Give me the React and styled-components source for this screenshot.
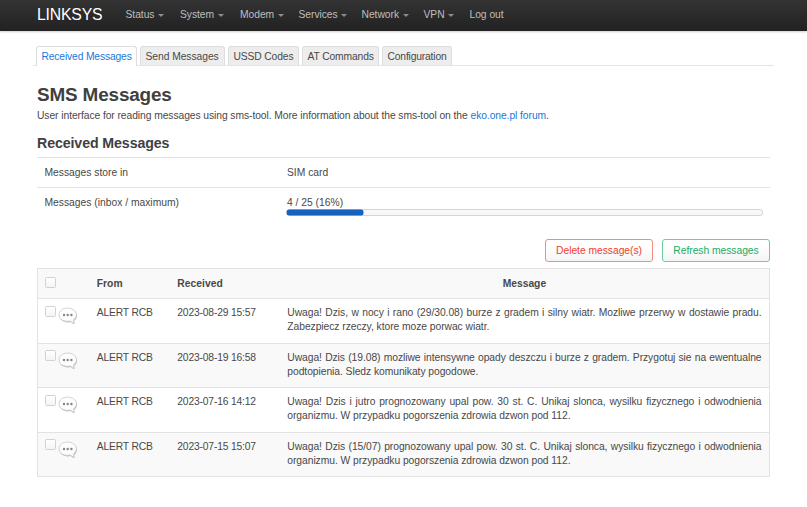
import React from "react";
import styled, { createGlobalStyle } from "styled-components";

const GlobalStyle = createGlobalStyle`
  * { box-sizing: border-box; }
  body {
    margin: 0;
    background: #fff;
    color: #484848;
    font: 10.3px/14.2px "Liberation Sans", Arial, sans-serif;
  }
`;

const TopBar = styled.header`
  height: 31px;
  padding-left: 37px;
  display: flex;
  align-items: center;
  background: linear-gradient(#333, #222);
  box-shadow: 0 1px 2px rgba(0, 0, 0, 0.2);
`;

const Brand = styled.div`
  width: 88.5px;
  color: #fff;
  font-size: 15.8px;
  line-height: 20px;
  padding-bottom: 2px;
  letter-spacing: -0.2px;
`;

const MenuItem = styled.a`
  width: ${(p) => p.$w}px;
  color: #bfbfbf;
  display: flex;
  align-items: center;
  white-space: nowrap;
  letter-spacing: -0.04px;
`;

const Caret = styled.i`
  margin: 1px 0 0 3.7px;
  border: 3px solid transparent;
  border-top-color: #8c8c8c;
  border-bottom: 0;
`;

const TabBar = styled.nav`
  height: 20px;
  margin: 15px 33px 0 33px;
  padding-left: 3px;
  display: flex;
  gap: 3px;
  border-bottom: 1px solid #e4e4e4;
`;

const Tab = styled.a`
  height: ${(p) => (p.$active ? 20 : 19)}px;
  width: ${(p) => p.$w}px;
  padding-left: 4.5px;
  line-height: 20px;
  white-space: nowrap;
  border: 1px solid #ddd;
  border-bottom: 0;
  border-radius: 3px 3px 0 0;
  letter-spacing: ${(p) => p.$ls || 0}px;
  background: ${(p) => (p.$active ? "#fff" : "#ededed")};
  color: ${(p) => (p.$active ? "#1a78da" : "#484848")};
`;

const Main = styled.main`
  margin: 0 37px;
`;

const Title = styled.h2`
  margin: 15px 0 0;
  font-size: 18.9px;
  line-height: 28px;
  color: #404040;
  letter-spacing: -0.15px;
`;

const Intro = styled.p`
  margin: 0;
  letter-spacing: ${(p) => p.$ls || 0}px;
  a { color: #1a78da; }
`;

const SectionTitle = styled.h3`
  margin: 6px 0 0;
  height: 28px;
  font-size: 14.2px;
  line-height: 28px;
  color: #404040;
  letter-spacing: -0.1px;
`;

const InfoRow = styled.div`
  display: flex;
  height: ${(p) => p.$h}px;
  padding: 8px 7px 0 7.5px;
  border-top: 1px solid #e2e2e2;
`;

const InfoLabel = styled.div`
  width: 242.5px;
  letter-spacing: ${(p) => p.$ls || 0}px;
`;

const InfoValue = styled.div`
  flex: 1;
`;

const Meter = styled.div`
  height: 7px;
  margin-top: -1px;
  border: 1px solid #d5d5d5;
  border-radius: 3px;
  background: #f8f8f8;
`;

const MeterFill = styled.div`
  height: 5px;
  margin-left: -1px;
  background: #1763bf;
  border-radius: 2px;
  box-shadow: 0 0 0 0.5px #1763bf;
`;

const Actions = styled.div`
  display: flex;
  justify-content: flex-end;
  gap: 9px;
  height: 29px;
`;

const Button = styled.button`
  width: 108px;
  height: 22.5px;
  padding: 1px 0 0;
  font: inherit;
  letter-spacing: -0.03px;
  color: ${(p) => p.$color};
  border: 1px solid ${(p) => p.$border};
  border-radius: 3px;
  background: linear-gradient(#fff 30%, #f4f4f4);
`;

const Table = styled.section`
  border: 1px solid #e2e2e2;
`;

const Row = styled.div`
  display: grid;
  grid-template-columns: 58.8px 80.5px 110px 1fr;
  height: ${(p) => p.$h}px;
  padding-right: 7.5px;
  padding-top: ${(p) => (p.$head ? 8 : 7)}px;
  font-weight: ${(p) => (p.$head ? 700 : 400)};
  background: ${(p) => (p.$shade ? "#f9f9f9" : "#fff")};
  & + & { border-top: 1px solid #e2e2e2; }
`;

const Cell = styled.div`
  text-align: ${(p) => p.$align || "left"};
  letter-spacing: ${(p) => p.$ls || 0}px;
`;

const Line = styled.div`
  white-space: nowrap;
  text-align-last: ${(p) => (p.$full ? "justify" : "left")};
  letter-spacing: -0.05px;
`;

const Mark = styled.div`
  display: flex;
  gap: 2px;
  padding-left: 7px;
`;

const Check = styled.span`
  width: 11px;
  height: 11px;
  margin-top: -0.5px;
  border: 1px solid #d2d2d2;
  border-radius: 1.5px;
  background: linear-gradient(#fff, #f4f4f4);
`;

const BubbleSvg = styled.svg`
  width: 20px;
  height: 19px;
`;

const Bubble = () => (
  <BubbleSvg viewBox="0 0 20 19">
    <path
      d="M9.5 2.6C4.6 2.6 1 5.400 1 9.200s3.500 6.600 8.500 6.600c1 0 2-.1 2.900-.4.900 1.200 2.300 2 4 1.900-.7-.9-1-2-.6-3.200 1.600-1.200 2.700-2.900 2.700-4.900 0-3.800-3.900-6.600-9-6.600z"
      fill="#999"
      opacity="0.65"
      transform="translate(0.5 0.6)"
    />
    <path
      d="M9.500 2.100C4.600 2.100 1 4.900 1 8.700s3.500 6.600 8.500 6.600c1 0 2-.1 2.900-.4.900 1.200 2.200 1.900 3.800 1.800-.7-.9-.9-1.900-.6-3 1.700-1.200 2.800-3 2.800-5 0-3.800-3.900-6.600-8.900-6.600z"
      fill="#fdfdfd"
      stroke="#c8c8c8"
      strokeWidth="0.8"
    />
    <g fill="#858585">
      <circle cx="6" cy="9" r="1.2" />
      <circle cx="9.700" cy="9" r="1.2" />
      <circle cx="13.400" cy="9" r="1.2" />
    </g>
  </BubbleSvg>
);

const menu = [
  ["Status", 54.5], ["System", 60], ["Modem", 58.5], ["Services", 63],
  ["Network", 62], ["VPN", 46], ["Log out", 50],
];

const tabs = [
  ["Received Messages", 101, -0.15], ["Send Messages", 85, -0.05], ["USSD Codes", 71, -0.13],
  ["AT Commands", 77, -0.13], ["Configuration", 70, -0.17],
];

const messages = [
  ["2023-08-29 15:57", "Uwaga! Dzis, w nocy i rano (29/30.08) burze z gradem i silny wiatr. Mozliwe przerwy w dostawie pradu.", "Zabezpiecz rzeczy, ktore moze porwac wiatr."],
  ["2023-08-19 16:58", "Uwaga! Dzis (19.08) mozliwe intensywne opady deszczu i burze z gradem. Przygotuj sie na ewentualne", "podtopienia. Sledz komunikaty pogodowe."],
  ["2023-07-16 14:12", "Uwaga! Dzis i jutro prognozowany upal pow. 30 st. C. Unikaj slonca, wysilku fizycznego i odwodnienia", "organizmu. W przypadku pogorszenia zdrowia dzwon pod 112."],
  ["2023-07-15 15:07", "Uwaga! Dzis (15/07) prognozowany upal pow. 30 st. C. Unikaj slonca, wysilku fizycznego i odwodnienia", "organizmu. W przypadku pogorszenia zdrowia dzwon pod 112."],
];

export default function App() {
  return (
    <>
      <GlobalStyle />
      <TopBar>
        <Brand>LINKSYS</Brand>
        {menu.map(([name, w]) => (
          <MenuItem key={name} $w={w}>
            {name}
            {name !== "Log out" && <Caret />}
          </MenuItem>
        ))}
      </TopBar>
      <TabBar>
        {tabs.map(([name, w, ls], i) => (
          <Tab key={name} $w={w} $ls={ls} $active={i === 0}>{name}</Tab>
        ))}
      </TabBar>
      <Main>
        <Title>SMS Messages</Title>
        <Intro $ls={-0.07}>
          User interface for reading messages using sms-tool. More information about the sms-tool on the <a>eko.one.pl forum</a>.
        </Intro>
        <SectionTitle>Received Messages</SectionTitle>
        <InfoRow $h={30}>
          <InfoLabel>Messages store in</InfoLabel>
          <InfoValue>SIM card</InfoValue>
        </InfoRow>
        <InfoRow $h={52}>
          <InfoLabel>Messages (inbox / maximum)</InfoLabel>
          <InfoValue>
            4 / 25 (16%)
            <Meter><MeterFill style={{ width: "16%" }} /></Meter>
          </InfoValue>
        </InfoRow>
        <Actions>
          <Button $color="#f0402c" $border="#f58a7e">Delete message(s)</Button>
          <Button $color="#17ad63" $border="#6bcf9c">Refresh messages</Button>
        </Actions>
        <Table>
          <Row $h={29} $head $shade>
            <Mark><Check /></Mark>
            <Cell>From</Cell>
            <Cell $ls={0.05}>Received</Cell>
            <Cell $align="center">Message</Cell>
          </Row>
          {messages.map(([date, first, second], i) => (
            <Row key={date} $h={44.45} $shade={i % 2 === 1}>
              <Mark><Check /><Bubble /></Mark>
              <Cell $ls={-0.18}>ALERT RCB</Cell>
              <Cell $ls={-0.17}>{date}</Cell>
              <Cell>
                <Line $full>{first}</Line>
                <Line>{second}</Line>
              </Cell>
            </Row>
          ))}
        </Table>
      </Main>
    </>
  );
}
